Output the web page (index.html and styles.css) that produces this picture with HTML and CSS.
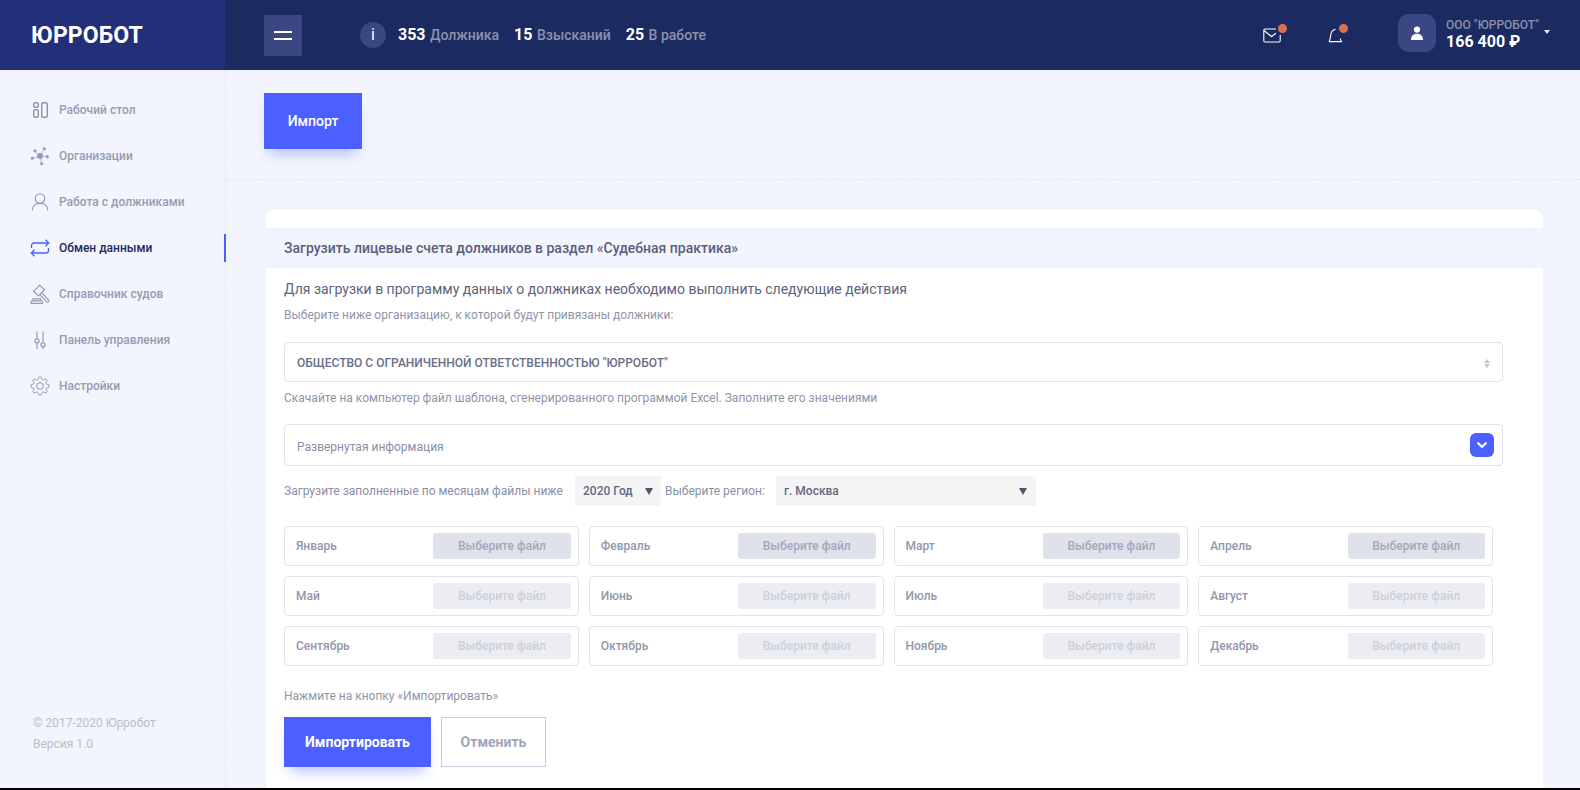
FILE: index.html
```html
<!DOCTYPE html>
<html lang="ru">
<head>
<meta charset="utf-8">
<title>Юрробот</title>
<link rel="stylesheet" href="styles.css">
</head>
<body>
<div class="app">
  <header class="topbar">
    <div class="logo">ЮРРОБОТ</div>
    <div class="topbar-main">
      <button class="burger" aria-label="Меню"><span></span><span></span></button>
      <div class="info-dot">i</div>
      <div class="stat"><b>353</b> Должника</div>
      <div class="stat"><b>15</b> Взысканий</div>
      <div class="stat"><b>25</b> В работе</div>
      <div class="top-right">
        <div class="notify notify-mail">
          <svg width="19" height="15" viewBox="0 0 19 15" fill="none" stroke="#fff" stroke-width="1.1"><path d="M13 1H2a1.2 1.2 0 0 0-1.2 1.2v10.6A1.2 1.2 0 0 0 2 14h14a1.200 1.200 0 0 0 1.200-1.200V7"/><path d="M1 2.500l7.500 6 4.500-3.200"/></svg>
          <i class="dot"></i>
        </div>
        <div class="notify notify-bell">
          <svg width="15" height="15" viewBox="0 0 15 15" fill="none" stroke="#fff" stroke-width="1.1"><path d="M1 13.600C2.500 11 2.500 9 2.800 6.500 3.100 3.500 5 1.800 7.500 1.200"/><path d="M1 13.600h12.500c-.8-1-1.200-2-1.300-3.100"/></svg>
          <i class="dot"></i>
        </div>
        <div class="avatar">
          <svg width="14" height="14" viewBox="0 0 14 14" fill="#fff"><circle cx="7" cy="3.600" r="3.100"/><path d="M1 14c0-4 2-6.300 6-6.300s6 2.300 6 6.300z"/></svg>
        </div>
        <div class="account">
          <div class="account-name">ООО "ЮРРОБОТ"</div>
          <div class="account-sum">166 400 ₽</div>
        </div>
        <i class="account-caret"></i>
      </div>
    </div>
  </header>

  <div class="body-row">
    <aside class="sidebar">
      <nav class="nav">
        <a class="nav-item">
          <svg width="20" height="20" viewBox="0 0 20 20" fill="none" stroke="#8e93ab" stroke-width="1.4"><rect x="3.700" y="2.700" width="4.600" height="4.600" rx="1.500"/><rect x="3.700" y="9.700" width="4.600" height="7.600" rx="1.500"/><rect x="11.700" y="2.700" width="5.600" height="14.600" rx="1.500"/></svg>
          <span>Рабочий стол</span>
        </a>
        <a class="nav-item">
          <svg width="20" height="20" viewBox="0 0 20 20" fill="#969bb3" stroke="#969bb3" stroke-width=".6"><path d="M10 10L5 5M10 10l4.300-7.300M10 10l7.300.7M10 10l1.700 7.700M10 10l-7.700 2.300"/><circle cx="10" cy="10" r="2.800"/><circle cx="5" cy="5" r="1.300"/><circle cx="14.300" cy="2.700" r="1.300"/><circle cx="17.300" cy="10.700" r="1.300"/><circle cx="11.700" cy="17.700" r="1.300"/><circle cx="2.300" cy="12.300" r="1.300"/></svg>
          <span>Организации</span>
        </a>
        <a class="nav-item">
          <svg width="20" height="20" viewBox="0 0 20 20" fill="none" stroke="#8e93ab" stroke-width="1.100"><circle cx="10" cy="6.500" r="4.700"/><path d="M2.300 18.500c0-4.500 3-7.300 7.700-7.300s7.700 2.800 7.700 7.300"/></svg>
          <span>Работа с должниками</span>
        </a>
        <a class="nav-item active">
          <svg width="20" height="20" viewBox="0 0 20 20" fill="none" stroke="#4c5fff" stroke-width="1.300"><path d="M1.500 10V7.500a2.500 2.500 0 0 1 2.500-2.500h14.500"/><path d="M15.500 1.800L18.700 5l-3.200 3.200"/><path d="M18.500 10v2.500a2.500 2.500 0 0 1-2.500 2.500H1.500"/><path d="M4.500 11.800L1.300 15l3.200 3.200"/></svg>
          <span>Обмен данными</span>
        </a>
        <a class="nav-item">
          <svg width="20" height="20" viewBox="0 0 20 20" fill="none" stroke="#969bb3" stroke-width="1.200"><path d="M3.800 7.200L9.800 1.200l4.600 4.600-6 6z"/><path d="M11.500 8.500l7 7.300a1.300 1.300 0 0 1-1.900 1.800l-7-7.300"/><path d="M1 19.300v-1.500a1 1 0 0 1 1-1h9.500a1 1 0 0 1 1 1v1.500z"/><path d="M3 16.800v-2h7.500v2"/></svg>
          <span>Справочник судов</span>
        </a>
        <a class="nav-item">
          <svg width="20" height="20" viewBox="0 0 20 20" fill="none" stroke="#8e93ab" stroke-width="1.100"><path d="M7 1.500v7M7 13v6M13 1.500v11M13 17v2"/><circle cx="7" cy="10.800" r="2.100"/><circle cx="13" cy="14.800" r="2.100"/></svg>
          <span>Панель управления</span>
        </a>
        <a class="nav-item">
          <svg width="20" height="20" viewBox="0 0 24 24" fill="none" stroke="#8e93ab" stroke-width="1.150"><circle cx="12" cy="12" r="4"/><path d="M19.400 15a1.650 1.650 0 0 0 .33 1.820l.06.06a2 2 0 0 1 0 2.830 2 2 0 0 1-2.830 0l-.06-.06a1.650 1.650 0 0 0-1.820-.33 1.650 1.650 0 0 0-1 1.510V21a2 2 0 0 1-2 2 2 2 0 0 1-2-2v-.09A1.650 1.650 0 0 0 9 19.400a1.650 1.650 0 0 0-1.820.33l-.06.06a2 2 0 0 1-2.830 0 2 2 0 0 1 0-2.830l.06-.06a1.650 1.650 0 0 0 .33-1.820 1.650 1.650 0 0 0-1.510-1H3a2 2 0 0 1-2-2 2 2 0 0 1 2-2h.09A1.650 1.650 0 0 0 4.600 9a1.650 1.650 0 0 0-.33-1.820l-.06-.06a2 2 0 0 1 0-2.830 2 2 0 0 1 2.830 0l.06.06a1.650 1.650 0 0 0 1.820.33H9a1.650 1.650 0 0 0 1-1.510V3a2 2 0 0 1 2-2 2 2 0 0 1 2 2v.09a1.650 1.650 0 0 0 1 1.510 1.650 1.650 0 0 0 1.820-.33l.06-.06a2 2 0 0 1 2.830 0 2 2 0 0 1 0 2.830l-.06.06a1.650 1.650 0 0 0-.33 1.820V9a1.650 1.650 0 0 0 1.510 1H21a2 2 0 0 1 2 2 2 2 0 0 1-2 2h-.09a1.650 1.650 0 0 0-1.510 1z"/></svg>
          <span>Настройки</span>
        </a>
      </nav>
      <div class="copyright">
        <div>© 2017-2020 Юрробот</div>
        <div>Версия 1.0</div>
      </div>
    </aside>

    <main class="main">
      <div class="toolbar">
        <button class="btn-primary btn-import">Импорт</button>
      </div>
      <section class="card">
        <h2 class="card-title">Загрузить лицевые счета должников в раздел «Судебная практика»</h2>
        <div class="card-body">
          <p class="lead">Для загрузки в программу данных о должниках необходимо выполнить следующие действия</p>
          <p class="hint hint-org">Выберите ниже организацию, к которой будут привязаны должники:</p>
          <div class="field field-org">
            <span>ОБЩЕСТВО С ОГРАНИЧЕННОЙ ОТВЕТСТВЕННОСТЬЮ "ЮРРОБОТ"</span>
            <i class="sort-arrows"></i>
          </div>
          <p class="hint hint-template">Скачайте на компьютер файл шаблона, сгенерированного программой Excel. Заполните его значениями</p>
          <div class="field field-details">
            <span>Развернутая информация</span>
            <button class="expand" aria-label="Развернуть">
              <svg width="12" height="8" viewBox="0 0 12 8" fill="none" stroke="#fff" stroke-width="2"><path d="M1.500 1.500L6 6l4.500-4.500"/></svg>
            </button>
          </div>
          <div class="filters">
            <span class="filter-label">Загрузите заполненные по месяцам файлы ниже</span>
            <div class="pick pick-year">2020 Год<i></i></div>
            <span class="filter-label filter-region">Выберите регион:</span>
            <div class="pick pick-region">г. Москва<i></i></div>
          </div>
          <div class="months">
            <div class="month"><span>Январь</span><button class="file-btn on">Выберите файл</button></div>
            <div class="month"><span>Февраль</span><button class="file-btn on">Выберите файл</button></div>
            <div class="month"><span>Март</span><button class="file-btn on">Выберите файл</button></div>
            <div class="month"><span>Апрель</span><button class="file-btn on">Выберите файл</button></div>
            <div class="month"><span>Май</span><button class="file-btn">Выберите файл</button></div>
            <div class="month"><span>Июнь</span><button class="file-btn">Выберите файл</button></div>
            <div class="month"><span>Июль</span><button class="file-btn">Выберите файл</button></div>
            <div class="month"><span>Август</span><button class="file-btn">Выберите файл</button></div>
            <div class="month"><span>Сентябрь</span><button class="file-btn">Выберите файл</button></div>
            <div class="month"><span>Октябрь</span><button class="file-btn">Выберите файл</button></div>
            <div class="month"><span>Ноябрь</span><button class="file-btn">Выберите файл</button></div>
            <div class="month"><span>Декабрь</span><button class="file-btn">Выберите файл</button></div>
          </div>
          <p class="hint hint-press">Нажмите на кнопку «Импортировать»</p>
          <div class="actions">
            <button class="btn-primary btn-run">Импортировать</button>
            <button class="btn-cancel">Отменить</button>
          </div>
        </div>
      </section>
    </main>
  </div>
</div>
</body>
</html>
```
FILE: styles.css
```css
* { box-sizing: border-box; }
html, body { margin: 0; height: 100%; background: #000; overflow: hidden; }
body { font-family: Roboto, "Noto Sans", sans-serif; font-size: 12px; }
button { font-family: inherit; border: 0; padding: 0; margin: 0; }
p, h2 { margin: 0; }

.app { height: 788px; display: flex; flex-direction: column; background: #f2f5fd; overflow: hidden; }

/* Top bar */
.topbar { height: 70px; flex: none; display: flex; background: #1b2a61; }
.logo { width: 225px; flex: none; background: #213079; color: #fff; font-size: 23px; font-weight: 700; line-height: 72px; padding-left: 31px; letter-spacing: .1px; }
.topbar-main { flex: 1; display: flex; align-items: center; padding-left: 39px; }
.burger { width: 38px; height: 41px; background: #3a4783; display: flex; flex-direction: column; justify-content: center; align-items: center; gap: 5px; margin-top: 1px; }
.burger span { display: block; width: 18px; height: 2px; background: #fff; }
.info-dot { width: 26px; height: 26px; border-radius: 50%; background: #3a4783; color: #fff; margin-left: 58px; text-align: center; line-height: 26px; font-size: 16px; font-weight: 400; }
.stat { color: #8d92ab; font-size: 14px; font-weight: 500; margin-left: 15px; margin-bottom: 2px; white-space: nowrap; }
.info-dot + .stat { margin-left: 12px; }
.stat b { color: #fff; font-size: 16px; font-weight: 700; margin-right: 1px; }
.top-right { margin-left: auto; display: flex; align-items: center; padding-right: 30px; }
.notify { position: relative; height: 15px; margin-top: 1px; }
.notify svg { display: block; }
.notify-bell { margin-left: 46px; }
.dot { position: absolute; width: 9px; height: 9px; border-radius: 50%; background: #d9714f; top: -4px; right: -5px; }
.notify-bell .dot { right: -5px; }
.avatar { width: 38px; height: 38px; border-radius: 11px; background: #3a4783; margin-left: 55px; display: flex; align-items: center; justify-content: center; margin-top: -4px; }
.account { margin-left: 10px; margin-top: -2px; }
.account-name { color: #8a8fa9; font-size: 12px; font-weight: 500; line-height: 16px; }
.account-sum { color: #fff; font-size: 16px; font-weight: 700; line-height: 18px; }
.account-caret { width: 0; height: 0; border: 3px solid transparent; border-top: 4px solid #e4e6f0; border-bottom: 0; margin-left: 5px; margin-top: -7px; }

/* Sidebar */
.body-row { flex: 1; display: flex; min-height: 0; }
.sidebar { width: 226px; flex: none; border-right: 1px dashed #e4e6ee; display: flex; flex-direction: column; justify-content: space-between; padding: 26px 0 33px; }
.nav { display: flex; flex-direction: column; gap: 18px; }
.nav-item { height: 28px; display: flex; align-items: center; gap: 9px; padding-left: 30px; color: #979bb3; font-size: 12px; font-weight: 500; position: relative; }
.nav-item svg { flex: none; }
.nav-item.active { color: #1e2a5e; }
.nav-item.active::after { content: ""; position: absolute; right: -1px; top: 0; width: 2px; height: 28px; background: #4c5fff; }
.copyright { padding-left: 33px; color: #b9bdca; font-size: 12px; line-height: 21px; }

/* Main */
.main { flex: 1; min-width: 0; }
.toolbar { height: 110px; padding: 23px 0 0 38px; border-bottom: 1px dashed #e4e6ee; }
.btn-primary { background: #4c5fff; color: #fff; box-shadow: 0 10px 14px -6px rgba(76, 95, 255, .4); }
.btn-import { width: 98px; height: 56px; font-size: 14px; font-weight: 500; }

.card { margin: 30px 37px 0 40px; padding-top: 18px; background: #fff; border-radius: 8px 8px 0 0; }
.card-title { height: 40px; line-height: 40px; padding-left: 18px; background: #f2f5fd; color: #5a5f7c; font-size: 14px; font-weight: 500; }
.card-body { padding: 11px 40px 30px 18px; }
.lead { color: #5d6280; font-size: 14px; line-height: 20px; }
.hint { color: #9094aa; font-size: 12px; line-height: 16px; }
.hint-org { margin-top: 8px; }
.hint-template { margin-top: 8px; }
.hint-press { margin-top: 22px; }

.field { display: flex; align-items: center; justify-content: space-between; border: 1px solid #e1e3ed; border-radius: 4px; padding-left: 12px; background: #fff; }
.field-org { height: 40px; margin-top: 19px; padding-right: 12px; color: #6a6f88; font-size: 12px; font-weight: 500; }
.field-org span { padding-top: 2px; }
.field-details { height: 42px; margin-top: 18px; padding-right: 8px; color: #8a8ea6; font-size: 12px; }
.field-details span { padding-top: 4px; }
.sort-arrows { position: relative; width: 6px; height: 9px; margin-top: 3px; }
.sort-arrows::before, .sort-arrows::after { content: ""; position: absolute; left: 0; border: 3px solid transparent; }
.sort-arrows::before { top: 0; border-bottom: 4px solid #c3c6d4; border-top: 0; }
.sort-arrows::after { bottom: 0; border-top: 4px solid #c3c6d4; border-bottom: 0; }
.expand { width: 24px; height: 24px; border-radius: 6px; background: #4c5fff; display: flex; align-items: center; justify-content: center; }

.filters { height: 30px; margin-top: 10px; display: flex; align-items: center; }
.filter-label { color: #8a8ea6; font-size: 12px; white-space: nowrap; width: 291px; }
.filter-region { width: 115px; padding-left: 4px; }
.pick { height: 30px; background: #f5f5f6; color: #646985; font-size: 12px; font-weight: 500; line-height: 30px; padding-left: 8px; position: relative; }
.pick i { position: absolute; right: 8px; top: 12px; width: 0; height: 0; border: 4px solid transparent; border-top: 7px solid #50566f; border-bottom: 0; }
.pick-year { width: 86px; }
.pick-region { width: 260px; }
.pick-region i { right: 9px; }

.months { margin: 20px 10px 0 0; display: grid; grid-template-columns: repeat(4, 1fr); gap: 10px; }
.month { height: 40px; border: 1px solid #e1e3ed; border-radius: 4px; padding: 0 7px 0 11px; display: flex; align-items: center; justify-content: space-between; color: #9296ae; font-weight: 500; font-size: 12px; }
.file-btn { width: 137.5px; height: 26px; border-radius: 3px; background: #ecedf2; color: #cdd0dc; font-size: 12px; font-weight: 500; }
.file-btn.on { background: #dfe2ea; color: #a4a8bb; }

.actions { margin-top: 13px; display: flex; gap: 10px; }
.btn-run { width: 147px; height: 50px; font-size: 14px; font-weight: 700; }
.btn-cancel { width: 105px; height: 50px; background: #fff; border: 1px solid #c8ccdb; color: #a1a5b9; font-size: 14px; font-weight: 700; }
```
